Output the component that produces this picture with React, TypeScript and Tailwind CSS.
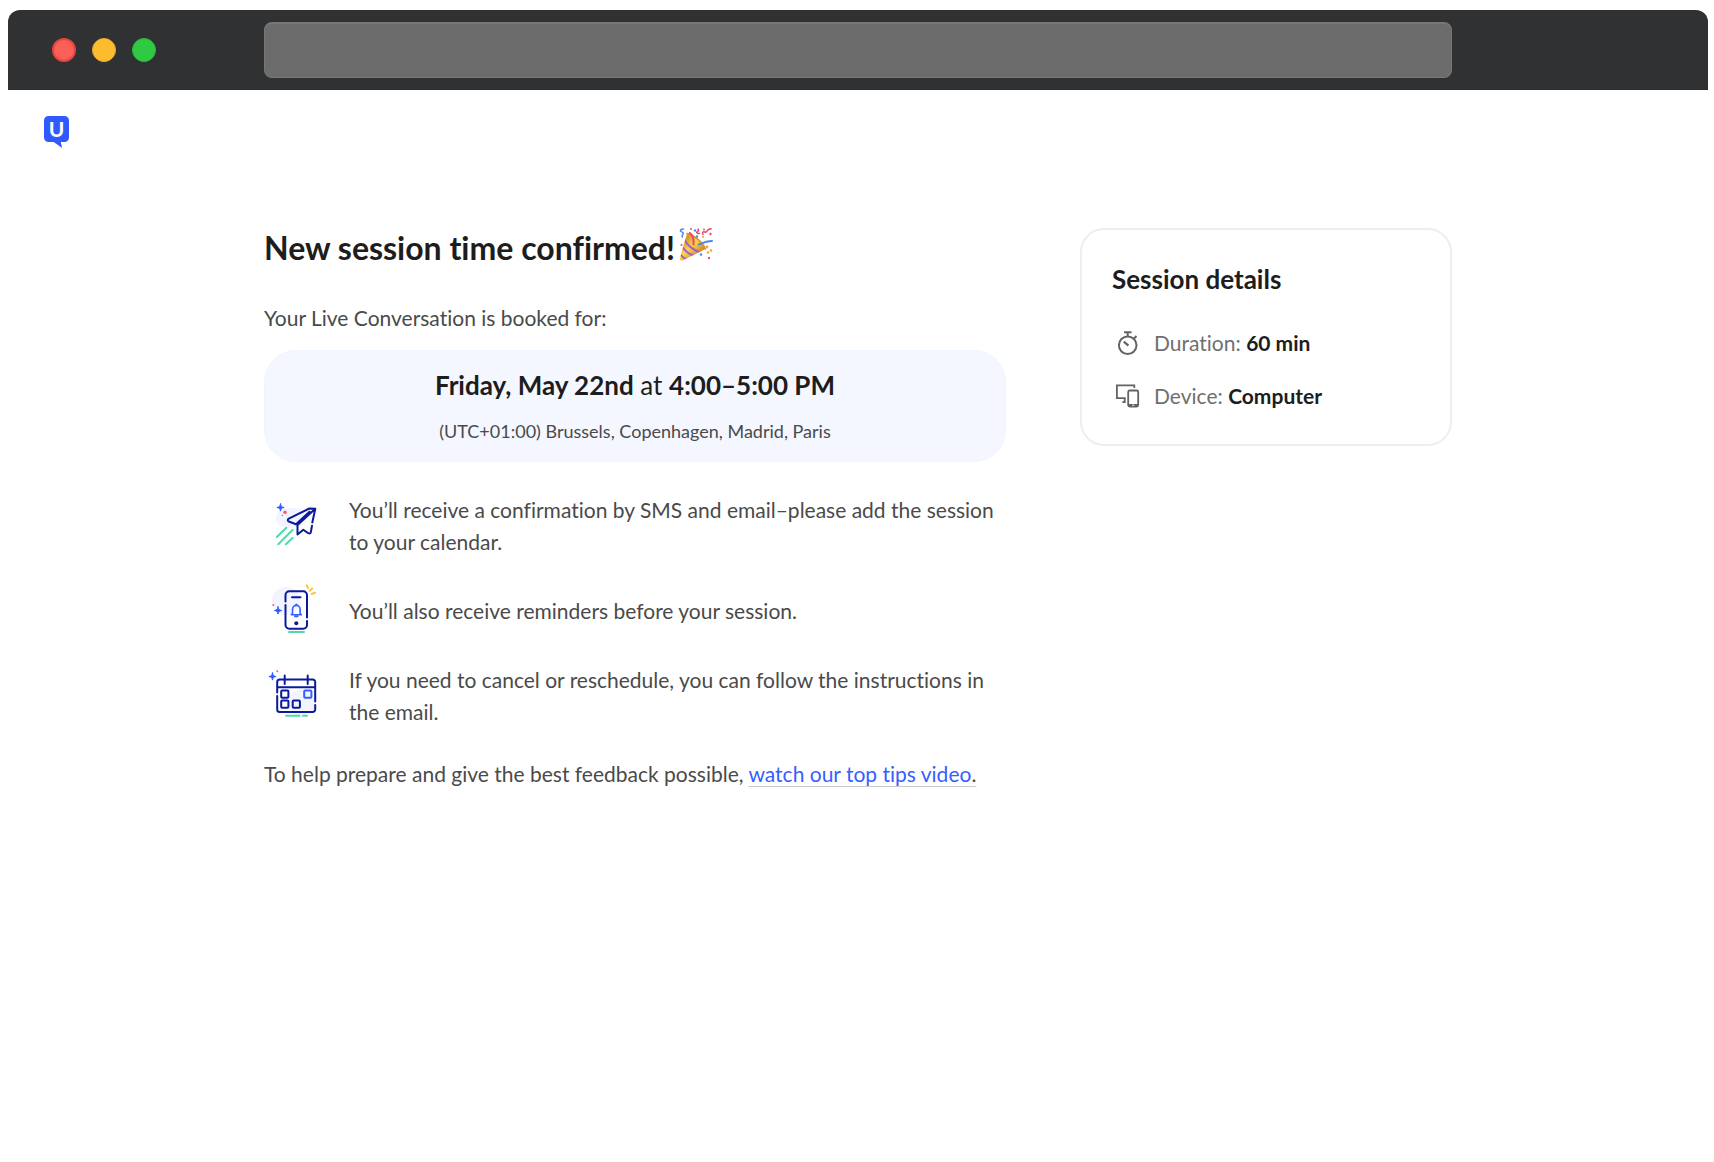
import type { ReactNode } from "react"

const Star = ({ x, y }: { x: number; y: number }) => (
  <path
    transform={`translate(${x} ${y})`}
    d="M0-3.600C.4-1.200 1.200-.4 3.600 0 1.200.4.4 1.200 0 3.600-.4 1.200-1.200.4-3.600 0-1.200-.4-.4-1.200 0-3.600Z"
    fill="#2f5bff"
    stroke="#2f5bff"
    strokeWidth="1"
  />
)

function Logo() {
  return (
    <svg viewBox="0 0 25 32" className="block h-8 w-[25px]" aria-hidden="true">
      <path d="M4.500 0h16A4.500 4.500 0 0 1 25 4.500v17a4.500 4.500 0 0 1-4.500 4.500H16.700l1.500 6L9.700 26H4.500A4.500 4.500 0 0 1 0 21.500v-17A4.500 4.500 0 0 1 4.500 0Z" fill="#3059ff" />
      <text x="12.500" y="20.500" textAnchor="middle" fontSize="21" fontWeight="700" fill="#fff">U</text>
    </svg>
  )
}

function PartyPopper() {
  return (
    <svg viewBox="0 0 34 34" className="block size-[34px]" aria-hidden="true" fill="none" strokeLinecap="round">
      <defs>
        <linearGradient id="cone" x1="4" y1="14" x2="18" y2="28" gradientUnits="userSpaceOnUse">
          <stop offset="0" stopColor="#d99a2b" />
          <stop offset=".45" stopColor="#fbd54c" />
          <stop offset="1" stopColor="#cf8a1f" />
        </linearGradient>
        <clipPath id="coneClip">
          <path d="M8 5.500C13 5 24 13 26.500 21L3.500 32.500C1.500 33 .5 31.500 1 30Z" />
        </clipPath>
      </defs>
      <g clipPath="url(#coneClip)">
        <path d="M0 0h34v34H0z" fill="url(#cone)" />
        <path d="M5 11C8 17 14 22 22 25M3 18.500C6 23 10 26.500 16 28M1 26c2 3 4 4.500 7 5.500" stroke="#a35fcf" strokeWidth="2" />
      </g>
      <path d="M8 5.500C12 5 24 14 26.500 21" stroke="#d9952c" strokeWidth="1.500" />
      <path d="M14.500 16.500c.5-5-.5-9-3.500-11.500" stroke="#f04468" strokeWidth="2" />
      <path d="M20 16.500c3.500-1.500 8-3.500 13-3.500" stroke="#4a86f0" strokeWidth="2" />
      <path d="M4.500 1C2 1 .5 2.500 2 3.500s3 1 2 2.500-1.500 2-.5 3" stroke="#4a86f0" strokeWidth="1.500" />
      <path d="M19 1c1 1.500 0 2.500-1 3s1 2 2.500 1.500M24 6.500c-1-2 0-3.500 2-2.500s2-2 3.500-2.500 2.500-1 2.500-.5" stroke="#f04468" strokeWidth="1.500" />
      <g fill="#ee4d70">
        <circle cx="12" cy="1" r="1" />
        <circle cx="25" cy="1.500" r="1" />
        <circle cx="31.500" cy="6" r="1.200" />
        <circle cx="30" cy="30" r="1.200" />
        <circle cx="2.500" cy="17" r="1" />
      </g>
      <g fill="#4a86f0">
        <circle cx="16" cy="2.500" r="1.200" />
        <circle cx="18" cy="8.500" r="1.200" />
        <circle cx="22" cy="26.500" r="1.200" />
      </g>
      <g fill="#f4a23b">
        <circle cx="28" cy="19" r="1.400" />
        <circle cx="32" cy="22.500" r="1.300" />
        <circle cx="29" cy="24.500" r="1.200" />
        <circle cx="24" cy="9" r="1" />
      </g>
    </svg>
  )
}

function PlaneIcon() {
  return (
    <svg viewBox="0 0 64 64" className="size-16 shrink-0" aria-hidden="true" fill="none" strokeWidth="2" strokeLinecap="round" strokeLinejoin="round">
      <path d="M12 24c0-8 9-11 19-10 9 0 13 6 12 11-2 7-8 9-16 9s-15-3-15-10Z" fill="#f2f5ff" />
      <Star x={16.5} y={13.5} />
      <circle cx="21" cy="18.300" r="1.700" fill="#ff5a5f" />
      <circle cx="18.300" cy="21.500" r=".8" fill="#ff5a5f" />
      <path d="M48.300 28.500 51.300 14.700 33.500 31M51.300 14.700l-6-.2-20.500 10.200c-1.500 1-1.300 2.300 0 2.800L32 30.300l13.500-12.500M33.500 31v9.500l5.800-4.800 5 3.500c1.200.6 2.200.3 2.500-1l1.200-6.500" stroke="#0b1a9c" />
      <path d="m22.300 33.700-9.500 9.300M28.700 35.700 14.300 50.300M28.700 43.700l-6.800 6.600" stroke="#4fdbab" />
    </svg>
  )
}

function PhoneIcon() {
  return (
    <svg viewBox="0 0 64 64" className="size-16 shrink-0" aria-hidden="true" fill="none" strokeWidth="2" strokeLinecap="round" strokeLinejoin="round">
      <circle cx="22" cy="22" r="14" fill="#f2f5ff" />
      <Star x={14} y={31.5} />
      <circle cx="9.300" cy="26" r="1" fill="#ff5a5f" />
      <path d="M21.500 22.500V16a3.700 3.700 0 0 1 3.700-3.700h14A3.700 3.700 0 0 1 43 16v22.500M43 42v4a3.700 3.700 0 0 1-3.700 3.700h-14a3.700 3.700 0 0 1-3.800-3.700V26M28 18.300h8.500" stroke="#0b1a9c" />
      <circle cx="32.300" cy="44.300" r="2" fill="#0b1a9c" />
      <path d="M28.500 34.500v-4.300a3.800 3.800 0 0 1 7.600 0v4.300l1.200 1.300H27.300Z" stroke="#3560ff" strokeWidth="1.600" />
      <path d="M32.300 25.500v.5M31 37.300h2.600" stroke="#3560ff" />
      <path d="M25 53h15" stroke="#4fdbab" />
      <path d="m42.700 6.300 1.300 2.700M45.700 11.700l2.500-2.200M47.700 15l3.300-1.300" stroke="#ffc43d" />
    </svg>
  )
}

function CalendarIcon() {
  return (
    <svg viewBox="0 0 64 64" className="size-16 shrink-0" aria-hidden="true" fill="none" strokeWidth="2" strokeLinecap="round" strokeLinejoin="round">
      <circle cx="37.500" cy="39" r="13.500" fill="#f2f5ff" />
      <Star x={8.5} y={12.5} />
      <circle cx="13.300" cy="7.200" r="1" fill="#ff5a5f" />
      <path d="M13.200 28.500V18a2.500 2.500 0 0 1 2.500-2.500h33A2.500 2.500 0 0 1 51.200 18v19.500M51.200 41v4.500a2.500 2.500 0 0 1-2.500 2.500h-33a2.500 2.500 0 0 1-2.500-2.500V32M13.200 23.300h38M20.700 11.500v8.500M43.700 11.500v8.500" stroke="#0b1a9c" />
      <g stroke="#0b1a9c">
        <rect x="17.200" y="26.500" width="7.200" height="7.200" rx="1" />
        <rect x="17.200" y="36.500" width="7.200" height="7.200" rx="1" />
        <rect x="28.700" y="36.500" width="7.200" height="7.200" rx="1" />
      </g>
      <rect x="40.200" y="26.500" width="7.200" height="7.200" rx="1" stroke="#3560ff" />
      <path d="M22 51.700h13.500M39 51.700h4" stroke="#4fdbab" />
    </svg>
  )
}

function StopwatchIcon() {
  return (
    <svg viewBox="0 0 32 32" className="size-8 shrink-0" aria-hidden="true" fill="none" stroke="#636363" strokeWidth="2">
      <circle cx="15.700" cy="18.300" r="8.800" />
      <path d="M12 5.200h7.500M15.700 5.200v4.300M21.800 11.700l2.700-2.700" />
      <path d="m11.800 14.700 4.600 4" strokeWidth="2.200" />
    </svg>
  )
}

function DevicesIcon() {
  return (
    <svg viewBox="0 0 32 32" className="size-8 shrink-0" aria-hidden="true" fill="none" stroke="#636363" strokeWidth="1.800">
      <path d="M22.300 8V5.300H4.900v12.800h8.700" />
      <path d="M10.500 22h3.200M12.700 18v4" />
      <rect x="16.200" y="10.500" width="10" height="16" rx="1.500" />
      <path d="M16.500 25.300h9.500" strokeWidth="2.600" />
      <path d="M20.300 25.200h2" stroke="#fff" strokeWidth="1" />
    </svg>
  )
}

function Step({ icon, children }: { icon: ReactNode; children: ReactNode }) {
  return (
    <li className="flex items-center gap-[21px]">
      {icon}
      <p>{children}</p>
    </li>
  )
}

function Detail({ icon, label, value }: { icon: ReactNode; label: string; value: string }) {
  return (
    <div className="flex items-center gap-[10px]">
      {icon}
      <p className="text-[#6f6f6f]">
        {label}: <strong className="font-bold text-[#1d1d1d]">{value}</strong>
      </p>
    </div>
  )
}

export default function App() {
  return (
    <div className="min-h-screen bg-white pt-[10px] pr-[6px] pl-2 font-['Lato',sans-serif] text-[21px] leading-8 text-[#4a4a4a] [font-variant-ligatures:none]">
      {/* Browser bar */}
      <div className="flex h-20 items-center rounded-t-xl border-b border-[#2f2a31] bg-[#303132] pr-64">
        <div className="flex w-64 shrink-0 gap-4 pl-11">
          <button aria-label="Close" className="size-6 rounded-full border-2 border-[#e2463f] bg-[#fc5f57]" />
          <button aria-label="Minimize" className="size-6 rounded-full border border-[#e9a936] bg-[#fdbc2e]" />
          <button aria-label="Maximize" className="size-6 rounded-full border border-[#2bb93a] bg-[#2fca41]" />
        </div>
        <input
          type="text"
          aria-label="Address"
          className="h-14 min-w-0 flex-1 rounded-lg border border-t-2 border-[#777777] bg-[#6c6c6c] px-4 text-white outline-none"
        />
      </div>

      <header className="pt-[26px] pl-9">
        <Logo />
      </header>

      <div className="flex items-start gap-[74px] px-64 pt-20">
        <main className="min-w-0 flex-1">
          <div className="flex items-start gap-1">
            <h1 className="text-[32px] leading-10 font-bold text-[#1d1d1d]">New session time confirmed!</h1>
            <PartyPopper />
          </div>

          <p className="mt-[34px]">Your Live Conversation is booked for:</p>

          <div className="mt-4 rounded-[32px] border border-[#eff5ff] bg-[#f4f7ff] pt-[18px] pb-4 text-center">
            <p className="text-[26px] text-[#1d1d1d]">
              <strong className="font-bold">Friday, May 22nd</strong> at <strong className="font-bold">4:00–5:00 PM</strong>
            </p>
            <p className="mt-4 text-[18px] leading-7">(UTC+01:00) Brussels, Copenhagen, Madrid, Paris</p>
          </div>

          <ul className="mt-8 space-y-[21px]">
            <Step icon={<PlaneIcon />}>
              You’ll receive a confirmation by SMS and email–please add the session to your calendar.
            </Step>
            <Step icon={<PhoneIcon />}>You’ll also receive reminders before your session.</Step>
            <Step icon={<CalendarIcon />}>
              If you need to cancel or reschedule, you can follow the instructions in the email.
            </Step>
          </ul>

          <p className="mt-[30px]">
            To help prepare and give the best feedback possible,{" "}
            <a href="#tips" className="underline decoration-[#c9c9c9] decoration-1 underline-offset-4 [text-decoration-skip-ink:none]">
              <span className="text-[#3560ff]">watch our top tips video</span>.
            </a>
          </p>
        </main>

        <aside className="w-[372px] shrink-0 rounded-3xl border-2 border-[#eeeeee] px-[30px] pt-[33px] pb-8">
          <h2 className="text-[26px] font-bold text-[#1d1d1d]">Session details</h2>
          <div className="mt-8 space-y-[21px]">
            <Detail icon={<StopwatchIcon />} label="Duration" value="60 min" />
            <Detail icon={<DevicesIcon />} label="Device" value="Computer" />
          </div>
        </aside>
      </div>
    </div>
  )
}
